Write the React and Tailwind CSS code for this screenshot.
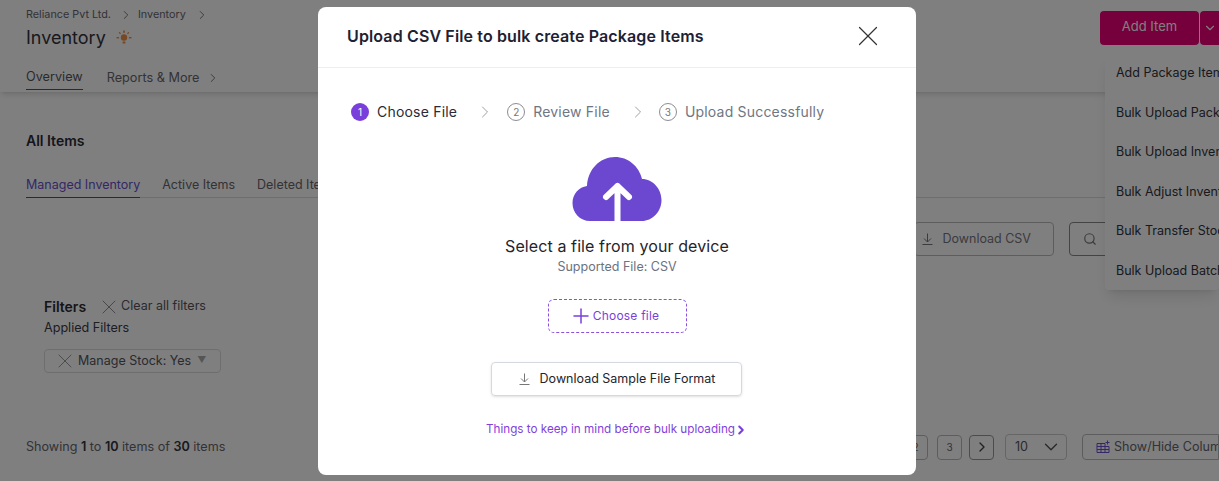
import { X, ChevronRight, ChevronDown, Search, Plus } from 'lucide-react';

const font = { fontFamily: 'Inter, "Noto Sans", sans-serif' };

const menuItems = [
    'Add Package Items',
    'Bulk Upload Package Items',
    'Bulk Upload Inventory',
    'Bulk Adjust Inventory',
    'Bulk Transfer Stock',
    'Bulk Upload Batches',
];

function Step({ num, label, active }) {
    return (
        <div className="flex items-center gap-2">
            {active ? (
                <span className="flex h-[18px] w-[18px] items-center justify-center rounded-full bg-[#7a3fdb] text-[10px] text-white">{num}</span>
            ) : (
                <span className="flex h-[18px] w-[18px] items-center justify-center rounded-full border border-[#8d8d93] text-[10px] text-[#77777d]">{num}</span>
            )}
            <span className={active ? 'text-sm tracking-[0.2px] text-[#2a2a3a]' : 'text-sm tracking-[0.2px] text-[#6f7683]'}>{label}</span>
        </div>
    );
}

function CloudIcon() {
    return (
        <svg width="90" height="64" viewBox="0 0 90 64">
            <path
                d="M18 64C8 64 0.5 56 0.5 46C0.5 37 7 30 15 29C16 12 28 0 43 0C56 0 67 9 70 22C81 22 89.5 32 89.5 43C89.5 55 80 64 70 64Z"
                fill="#6c47d0"
            />
            <path d="M45.5 64V29M34 40L45.5 29L57 40" fill="none" stroke="#fff" strokeWidth="6" strokeLinecap="round" strokeLinejoin="round" />
        </svg>
    );
}

function BulbIcon() {
    return (
        <svg width="16" height="16" viewBox="0 0 16 16" className="shrink-0" fill="#f0904a">
            <circle cx="8" cy="7.5" r="3.2" />
            <rect x="6.6" y="11.5" width="2.8" height="2" />
            <rect x="7.2" y="0.5" width="1.6" height="2.4" />
            <rect x="0.5" y="7" width="2.6" height="1.4" />
            <rect x="12.9" y="7" width="2.6" height="1.4" />
            <path d="M2.6 2.6L3.8 2L5 3.6L4 4.3ZM13.4 2.6L12.2 2L11 3.6L12 4.3Z" />
        </svg>
    );
}

function DownloadIcon({ color }) {
    return (
        <svg width="11" height="12" viewBox="0 0 11 12" className="shrink-0" fill="none" stroke={color} strokeWidth="1">
            <path d="M5.5 0.5V9M2 5.5L5.5 9L9 5.5M0.5 11.5H10.5" />
        </svg>
    );
}

function UploadModal() {
    return (
        <div className="flex h-[468px] w-[598px] flex-col rounded-lg bg-white">
            <div className="flex h-[61px] items-center justify-between border-b border-[#eeeeee] pb-[2px] pl-[29px] pr-[31px]">
                <h2 className="text-base font-semibold tracking-[0.13px] text-[#1c2233]">Upload CSV File to bulk create Package Items</h2>
                <X size={34} strokeWidth={0.85} className="text-[#333333]" />
            </div>
            <div className="flex items-center pl-[33px] pt-[34px]">
                <Step num={1} label="Choose File" active />
                <ChevronRight size={20} strokeWidth={1} className="ml-[18px] mr-[12px] text-[#8d8d93]" />
                <Step num={2} label="Review File" />
                <ChevronRight size={20} strokeWidth={1} className="ml-[18px] mr-[11px] text-[#8d8d93]" />
                <Step num={3} label="Upload Successfully" />
            </div>
            <div className="flex flex-col items-center pt-[35px]">
                <CloudIcon />
                <p className="mt-[15px] text-base leading-5 tracking-[0.1px] text-[#24242c]">Select a file from your device</p>
                <p className="mt-[3px] text-[12.5px] leading-4 text-[#6c7280]">Supported File: CSV</p>
                <div className="mt-[24px] flex h-[34px] w-[139px] items-center justify-center rounded-md border border-dashed border-[#8b4fe0] pr-[6px]">
                    <Plus size={24} strokeWidth={1.5} className="text-[#7a3fdb]" />
                    <span className="text-xs tracking-[0.2px] text-[#7a3fdb]">Choose file</span>
                </div>
                <div className="mr-[2px] mt-[29px] flex h-[34px] w-[251px] items-center justify-center gap-[10px] rounded border border-[#d5d8df] pl-[2px] shadow-sm">
                    <DownloadIcon color="#777777" />
                    <span className="text-[12.5px] text-[#24242c]">Download Sample File Format</span>
                </div>
                <div className="mt-[25px] flex items-center">
                    <span className="text-[11.7px] text-[#8142dc]">Things to keep in mind before bulk uploading</span>
                    <ChevronRight size={14} strokeWidth={3.5} className="-ml-px text-[#7a3fdb]" />
                </div>
            </div>
        </div>
    );
}

function AddItemMenu() {
    return (
        <div className="absolute right-0 top-[53px] h-[237px] w-[114px] overflow-hidden rounded bg-white pl-[11px] pt-[10px] shadow-lg">
            {menuItems.map((item) => (
                <p key={item} className="h-[39.6px] whitespace-nowrap text-[12.5px] leading-[20px] text-[#33333c]">{item}</p>
            ))}
        </div>
    );
}

function PageBehind() {
    return (
        <div className="h-[481px] w-[1219px] overflow-hidden bg-white">
            <header className="relative flex h-[92px] justify-between pl-[26px] shadow-md">
                <div>
                    <div className="flex items-center pt-[7px] text-[10.8px] leading-4 text-[#66666e]">
                        <span>Reliance Pvt Ltd.</span>
                        <ChevronRight size={14} strokeWidth={1.5} className="ml-[8px] mr-[5px]" />
                        <span>Inventory</span>
                        <ChevronRight size={14} strokeWidth={1.5} className="ml-[9px]" />
                    </div>
                    <div className="mt-[1px] flex items-center gap-[10px]">
                        <h1 className="text-lg leading-7 text-[#33333c]">Inventory</h1>
                        <BulbIcon />
                    </div>
                    <div className="mt-[17px] flex items-center text-[12.7px] leading-4">
                        <span className="border-b border-[#5b3fc4] pb-[4px] text-[#55555d]">Overview</span>
                        <span className="ml-[24px] pb-[4px] text-[#66666e]">Reports &amp; More</span>
                        <ChevronRight size={14} strokeWidth={1.5} className="ml-[6px] mb-[4px] text-[#66666e]" />
                    </div>
                </div>
                <div className="flex items-start gap-[1px] pt-[11px]">
                    <button className="h-[34px] w-[99px] rounded bg-[#ea0078] pb-[2px] text-[13px] text-white">Add Item</button>
                    <button className="flex h-[34px] w-[19px] items-center justify-center rounded-l bg-[#ea0078] text-white">
                        <ChevronDown size={14} />
                    </button>
                </div>
                <AddItemMenu />
            </header>

            <section className="pl-[26px] pt-[40px]">
                <h2 className="text-sm font-semibold leading-[18px] text-[#2b2b35]">All Items</h2>
                <div className="mt-[26px] flex h-[22px] gap-[22px] border-b border-[#dddddd] text-[12.5px] leading-4">
                    <span className="h-[22px] border-b border-[#5b3fc4] pt-[1px] text-[#6a4fd0]">Managed Inventory</span>
                    <span className="pt-[1px] text-[#66666e]">Active Items</span>
                    <span className="pt-[1px] text-[#66666e]">Deleted Items</span>
                </div>
                <div className="mt-[24px] flex h-[34px] justify-end gap-[15px]">
                    <div className="flex w-[140px] items-center justify-end gap-[9px] rounded border border-[#bbbbbb] pr-[22px] text-[12.5px] text-[#77777d]">
                        <DownloadIcon color="#77777d" />
                        <span>Download CSV</span>
                    </div>
                    <div className="flex w-[150px] items-center rounded border border-[#888888] pl-[13px] text-xs text-[#77777d]">
                        <Search size={14} strokeWidth={2} />
                    </div>
                </div>
                <div className="ml-[18px] mt-[41px]">
                    <div className="flex h-[20px] items-center">
                        <span className="text-sm font-semibold leading-[20px] text-[#2b2b35]">Filters</span>
                        <X size={24} strokeWidth={0.6} className="ml-[11px] text-[#44444c]" />
                        <span className="mb-[2px] text-[12.5px] text-[#55555d]">Clear all filters</span>
                    </div>
                    <p className="mt-[3px] text-[12.6px] leading-4 text-[#3a3a44]">Applied Filters</p>
                    <div className="mt-[13px] flex h-[24px] w-[177px] items-center rounded border border-[#dddddd] pl-[8px] text-[12.5px] text-[#55555d]">
                        <X size={24} strokeWidth={0.6} />
                        <span className="ml-[1px]">Manage Stock: Yes</span>
                        <span className="mb-[4px] ml-[6px] text-[9px] leading-none text-[#aaaaaa]">▼</span>
                    </div>
                </div>
                <div className="mt-[61px] flex h-[26px] items-center justify-between text-[12.6px]">
                    <p className="text-[#66666e]">
                        Showing <b className="font-semibold text-[#33333c]">1</b> to <b className="font-semibold text-[#33333c]">10</b> items of <b className="font-semibold text-[#33333c]">30</b> items
                    </p>
                    <div className="flex items-center">
                        <span className="mr-[9px] flex h-[25px] w-[25px] items-center justify-center rounded border border-[#bbbbbb] text-[10px] text-[#66666e]">2</span>
                        <span className="mr-[7px] flex h-[25px] w-[25px] items-center justify-center rounded border border-[#bbbbbb] text-[10px] text-[#66666e]">3</span>
                        <span className="flex h-[25px] w-[25px] items-center justify-center rounded border border-[#999999] text-[#44444c]">
                            <ChevronRight size={16} />
                        </span>
                        <span className="ml-[11px] flex h-[26px] w-[62px] items-center justify-between rounded border border-[#cccccc] pl-[9px] pr-[4px] text-[#55555d]">
                            10 <ChevronDown size={22} strokeWidth={1.5} />
                        </span>
                        <span className="ml-[15px] flex h-[26px] w-[137px] items-center gap-[4px] overflow-hidden whitespace-nowrap rounded-l border border-[#bbbbbb] pl-[13px] text-[#66666e]">
                            <svg width="14" height="14" viewBox="0 0 14 14" className="shrink-0" fill="none" stroke="#6a4fd0" strokeWidth="1">
                                <path d="M1 3.5H9M1 6.5H13M1 9.5H13M1 12.5H13M1 3.5V12.5M13 6.5V12.5M5 3.5V12.5M9 3.5V12.5M11.5 0.5V4.5M9.5 2.5H13.5" />
                            </svg>
                            Show/Hide Columns
                        </span>
                    </div>
                </div>
            </section>
        </div>
    );
}

export default function App() {
    return (
        <div className="relative h-[481px] w-[1219px] overflow-hidden" style={font}>
            <PageBehind />
            <div className="absolute inset-0 bg-black/50 pl-[318px] pt-[7px]">
                <UploadModal />
            </div>
        </div>
    );
}
